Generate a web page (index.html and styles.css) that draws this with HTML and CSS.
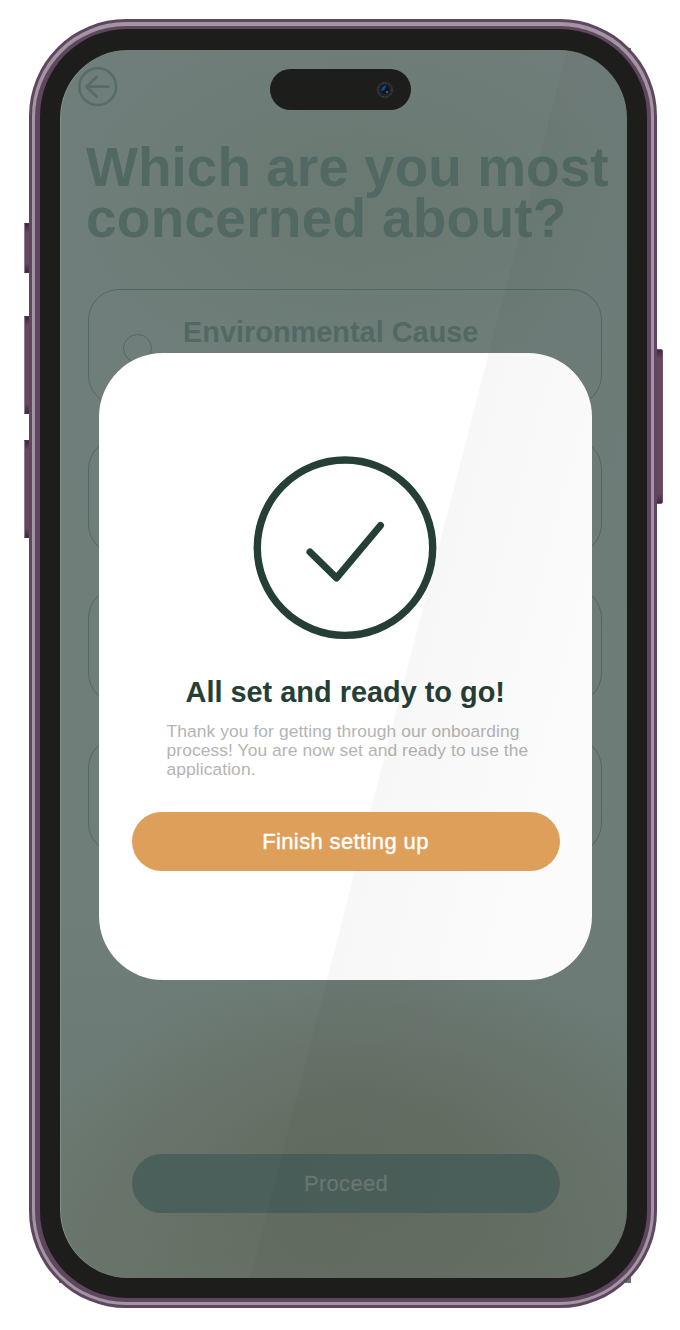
FILE: index.html
```html
<!DOCTYPE html>
<html lang="en">
<head>
<meta charset="utf-8">
<title>Onboarding</title>
<link rel="stylesheet" href="styles.css">
</head>
<body>
<div class="device">
  <div class="backing"></div>
  <i class="key mute"></i>
  <i class="key vol-up"></i>
  <i class="key vol-down"></i>
  <i class="key power"></i>
  <div class="rim-outer"><div class="rim-light"><div class="rim-inner"><div class="bezel">
    <div class="screen">
      <svg class="back" viewBox="0 0 40 40" fill="none" stroke="#566c66" stroke-linecap="round" stroke-linejoin="round">
        <circle cx="19.700" cy="19.700" r="18.400" stroke-width="2.500"/>
        <path d="M30.500 19.700H8.500M18.500 10L8.500 19.700L18.500 29.500" stroke-width="2.8"/>
      </svg>
      <h1 class="question"><span class="line">Which are you most</span><span class="line wide">concerned about?</span></h1>
      <div class="options">
        <div class="option"><span class="radio"></span><span class="option-name">Environmental Cause</span></div>
        <div class="option"></div>
        <div class="option"></div>
        <div class="option"></div>
      </div>
      <div class="proceed">Proceed</div>

      <div class="modal">
        <svg class="check" viewBox="0 0 184 184" fill="none" stroke="#253e36" stroke-linecap="round" stroke-linejoin="round">
          <circle cx="92" cy="91.700" r="87.700" stroke-width="7.400"/>
          <path d="M57 96L83.500 122L127.500 69.500" stroke-width="7"/>
        </svg>
        <h2 class="modal-title">All set and ready to go!</h2>
        <p class="modal-text">Thank you for getting through our onboarding<br>process! You are now set and ready to use the<br>application.</p>
        <div class="finish">Finish setting up</div>
      </div>
      <div class="sheen"></div>
      <div class="island">
        <svg class="lens" viewBox="0 0 20 20">
          <circle cx="10" cy="10" r="8.500" fill="#29282b"/>
          <circle cx="10" cy="10" r="7" fill="#222126" stroke="#454349" stroke-width="1" stroke-dasharray="2 1"/>
          <circle cx="10" cy="9.500" r="4.300" fill="#0b1420"/>
          <path d="M6.500 11.500Q6 6 11.500 5.500L9.500 9.500Z" fill="#0b50a0"/>
          <circle cx="12" cy="12" r=".8" fill="#a8b4b0"/>
        </svg>
      </div>
    </div>
  </div></div></div></div>
</div>
</body>
</html>
```
FILE: styles.css
```css
* { box-sizing: border-box; }

body {
  margin: 0;
  background: #fff;
  font-family: "Liberation Sans", Arial, sans-serif;
}

.device {
  position: relative;
  width: 680px;
  height: 1330px;
  padding: 19px 0 0 29px;
}

.backing {
  position: absolute;
  left: 59px;
  top: 48px;
  width: 572px;
  height: 1235px;
  border-top-left-radius: 40px;
  background: #66756d;
}

.key {
  position: absolute;
  background: linear-gradient(#3a2c39 0, #65485f 9px, #65485f calc(100% - 9px), #3a2c39 100%);
  border: 1px solid #4a3549;
  border-left-color: #8f7c90;
}
.mute { left: 24px; top: 223px; width: 6px; height: 50px; }
.vol-up { left: 24px; top: 316px; width: 6px; height: 98px; }
.vol-down { left: 24px; top: 440px; width: 6px; height: 98px; }
.power {
  left: 656px;
  top: 349px;
  width: 7px;
  height: 155px;
  border-color: #6f5069;
  border-radius: 0 2px 2px 0;
}

.rim-outer {
  position: relative;
  width: 628px;
  height: 1289px;
  padding: 3px;
  border-radius: 97px;
  background: #5f465e;
}
.rim-light {
  height: 100%;
  padding: 4px 3px 3px;
  border-radius: 94px;
  background: #a396a4;
}
.rim-inner {
  height: 100%;
  padding: 3px 4px 4px 5px;
  border-radius: 91px;
  background: #5f465e;
}
.bezel {
  height: 100%;
  padding: 21px 20px 20px;
  border-radius: 87px;
  background: #1d1d1b;
}

.screen {
  position: relative;
  height: 1228px;
  overflow: hidden;
  border-radius: 68px;
  padding: 17px 25px 0 18px;
  background:
    radial-gradient(ellipse 330px 240px at 310px 1140px, #636c60 0%, rgba(99, 108, 96, .8) 35%, rgba(99, 108, 96, 0) 100%),
    radial-gradient(ellipse 300px 190px at 300px 150px, rgba(106, 122, 114, .95) 25%, rgba(106, 122, 114, 0) 100%),
    linear-gradient(#707e7b 0, #6f7e79 70%, #6c7b75 83%, #69756b 100%);
  box-shadow: inset 1px 0 0 #84908c;
}

.back {
  display: block;
  width: 40px;
  height: 40px;
}

.question {
  margin: 35px 0 0 8px;
  color: #526963;
  font-size: 55px;
  line-height: 51px;
  white-space: nowrap;
}
.line { display: block; }
.wide { letter-spacing: .25px; }

.options {
  display: flex;
  flex-direction: column;
  gap: 32.2px;
  margin: 45px 0 0 10px;
}
.option {
  display: flex;
  height: 117px;
  border: 1px solid #526963;
  border-radius: 31px;
  padding: 27px 0 0 34px;
}
.radio {
  width: 29px;
  height: 29px;
  margin-top: 17px;
  border: 1px solid #526963;
  border-radius: 50%;
}
.option-name {
  margin: -1px 0 0 31px;
  color: #526963;
  font-size: 28.9px;
  line-height: 32px;
  font-weight: 700;
}

.proceed,
.finish {
  width: 428px;
  height: 59px;
  border-radius: 30px;
  font-size: 22px;
  line-height: 60px;
  text-align: center;
}
.proceed {
  margin: 300px 0 0 54px;
  background: #4b605b;
  color: #6a7a73;
  letter-spacing: .3px;
  -webkit-text-stroke: .3px #6a7a73;
}

.modal {
  position: absolute;
  left: 38.5px;
  top: 302.5px;
  width: 493.5px;
  height: 627px;
  padding: 103.5px 33px 0;
  border-radius: 64px;
  background: #fff;
}
.check {
  display: block;
  width: 184px;
  height: 184px;
  margin: 0 auto;
}
.modal-title {
  margin: 35px 0 0;
  color: #253e36;
  font-size: 28.9px;
  line-height: 34px;
  text-align: center;
}
.modal-text {
  margin: 12.5px 0 0 35px;
  color: #b4b4b4;
  font-size: 17.4px;
  line-height: 19px;
  letter-spacing: .09px;
  white-space: nowrap;
}
/* The button stays above the screen sheen, so its fill is even. */
.finish {
  position: relative;
  z-index: 1;
  margin-top: 33px;
  background: #de9f5a;
  color: #fff;
  letter-spacing: .38px;
  -webkit-text-stroke: .4px #fff;
}

.sheen {
  position: absolute;
  inset: 0;
  clip-path: polygon(507px 0, 100% 0, 100% 100%, 190px 100%);
  background: linear-gradient(105deg, rgba(0, 0, 0, .04) 45%, rgba(0, 0, 0, .015) 80%);
}

.island {
  position: absolute;
  left: 210px;
  top: 19px;
  width: 141px;
  height: 41px;
  padding: 11px 0 0 105px;
  border-radius: 21px;
  background: #1d1d1b;
}
.lens {
  display: block;
  width: 20px;
  height: 20px;
}
```
